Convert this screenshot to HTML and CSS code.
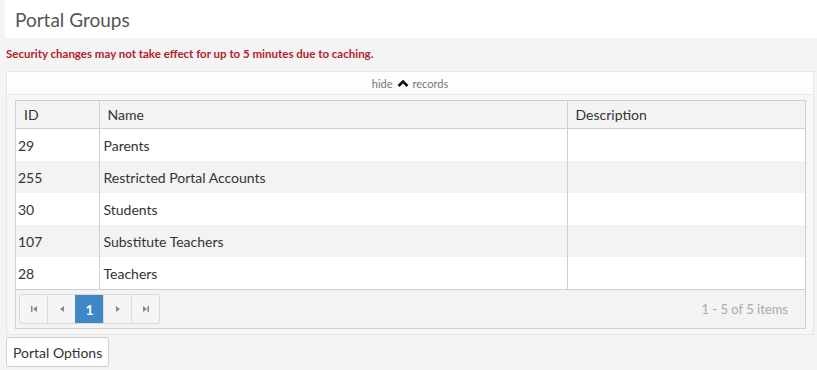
FILE: index.html
```html
<!DOCTYPE html>
<html lang="en">
<head>
    <meta charset="UTF-8">
    <title>Portal Groups</title>
    <link rel="stylesheet" href="styles.css">
</head>
<body>
    <div class="page-title">
        <h1>Portal Groups</h1>
    </div>
    <p class="warning">Security changes may not take effect for up to 5 minutes due to caching.</p>
    <div class="panel">
        <div class="panel-toggle">
            hide
            <svg class="chevron" width="12" height="8" viewBox="0 0 12 8"><path d="M1.5 7 L6 2.5 L10.5 7" fill="none" stroke="#111" stroke-width="2.6"/></svg>
            records
        </div>
        <div class="panel-body">
            <div class="grid">
                <table>
                    <colgroup>
                        <col class="col-id">
                        <col class="col-name">
                        <col>
                    </colgroup>
                    <thead>
                        <tr><th>ID</th><th>Name</th><th>Description</th></tr>
                    </thead>
                    <tbody>
                        <tr><td>29</td><td>Parents</td><td></td></tr>
                        <tr class="alt"><td>255</td><td>Restricted Portal Accounts</td><td></td></tr>
                        <tr><td>30</td><td>Students</td><td></td></tr>
                        <tr class="alt"><td>107</td><td>Substitute Teachers</td><td></td></tr>
                        <tr><td>28</td><td>Teachers</td><td></td></tr>
                    </tbody>
                </table>
                <div class="pager">
                    <div class="pager-nav">
                        <span class="pager-btn">
                            <svg width="8" height="8" viewBox="0 0 8 8"><rect x="1" y="1" width="1.5" height="6" fill="#888"/><path d="M7 1 L3 4 L7 7 Z" fill="#888"/></svg>
                        </span>
                        <span class="pager-btn">
                            <svg width="8" height="8" viewBox="0 0 8 8"><path d="M6 1 L2 4 L6 7 Z" fill="#888"/></svg>
                        </span>
                        <span class="pager-btn active">1</span>
                        <span class="pager-btn">
                            <svg width="8" height="8" viewBox="0 0 8 8"><path d="M2 1 L6 4 L2 7 Z" fill="#888"/></svg>
                        </span>
                        <span class="pager-btn">
                            <svg width="8" height="8" viewBox="0 0 8 8"><path d="M1 1 L5 4 L1 7 Z" fill="#888"/><rect x="5.5" y="1" width="1.5" height="6" fill="#888"/></svg>
                        </span>
                    </div>
                    <span class="pager-info">1 - 5 of 5 items</span>
                </div>
            </div>
        </div>
    </div>
    <button class="btn">Portal Options</button>
</body>
</html>
```

FILE: styles.css
```css
body {
    margin: 0;
    background-color: #f4f4f4;
    font-family: Lato, "Open Sans", sans-serif;
    color: #333;
    font-size: 14px;
}
.page-title {
    background-color: #fff;
    margin-left: 5px;
    height: 38px;
    display: flex;
    align-items: center;
    padding-left: 10px;
}
.page-title h1 {
    margin: 0;
    font-size: 19px;
    font-weight: normal;
    color: #555;
}
.warning {
    margin: 9px 0 0 6px;
    font-size: 11.5px;
    font-weight: bold;
    color: #b3212b;
    line-height: 14px;
}
.panel {
    margin: 10px 3px 0 6px;
    border: 1px solid #e6e6e6;
    background-color: #f7f7f7;
}
.panel-toggle {
    background-color: #fdfdfd;
    height: 22px;
    border-bottom: 1px solid #e2ebf1;
    display: flex;
    align-items: center;
    justify-content: center;
    gap: 4px;
    font-size: 11px;
    color: #777;
}
.panel-body {
    padding: 5px 7px 5px 8px;
}
.grid {
    border: 1px solid #cfcfcf;
    background-color: #fff;
}
table {
    width: 100%;
    border-collapse: collapse;
    table-layout: fixed;
}
.col-id {
    width: 83px;
}
.col-name {
    width: 468px;
}
th {
    background-color: #f3f3f3;
    font-weight: normal;
    text-align: left;
    height: 27px;
    padding: 0 8px;
    border-bottom: 1px solid #cfcfcf;
    border-left: 1px solid #cfcfcf;
}
th:first-child,
td:first-child {
    border-left: none;
}
td {
    height: 32px;
    padding: 0 4px 0 4px;
    border-left: 1px solid #cfcfcf;
}
td:first-child {
    padding-left: 2px;
}
tr.alt td {
    background-color: #f3f3f3;
}
.pager {
    background-color: #f3f3f3;
    border-top: 1px solid #cfcfcf;
    height: 38px;
    display: flex;
    align-items: center;
    justify-content: space-between;
    padding: 0 17px 0 3px;
}
.pager-nav {
    display: flex;
    border: 1px solid #d9d9d9;
    border-radius: 3px;
    background-color: #f5f5f5;
    overflow: hidden;
}
.pager-btn {
    width: 27px;
    height: 28px;
    display: flex;
    align-items: center;
    justify-content: center;
    border-left: 1px solid #dcdcdc;
}
.pager-btn:first-child {
    border-left: none;
}
.pager-btn.active {
    background-color: #3f88c8;
    color: #fff;
    font-weight: bold;
    border-left-color: #3f88c8;
}
.pager-info {
    color: #aaa;
    font-size: 13px;
}
.btn {
    margin: 2px 0 0 6px;
    background-color: #fff;
    border: 1px solid #cfcfcf;
    border-radius: 3px;
    height: 30px;
    padding: 0 6px;
    font-family: Lato, "Open Sans", sans-serif;
    font-size: 14px;
    color: #333;
}
```
